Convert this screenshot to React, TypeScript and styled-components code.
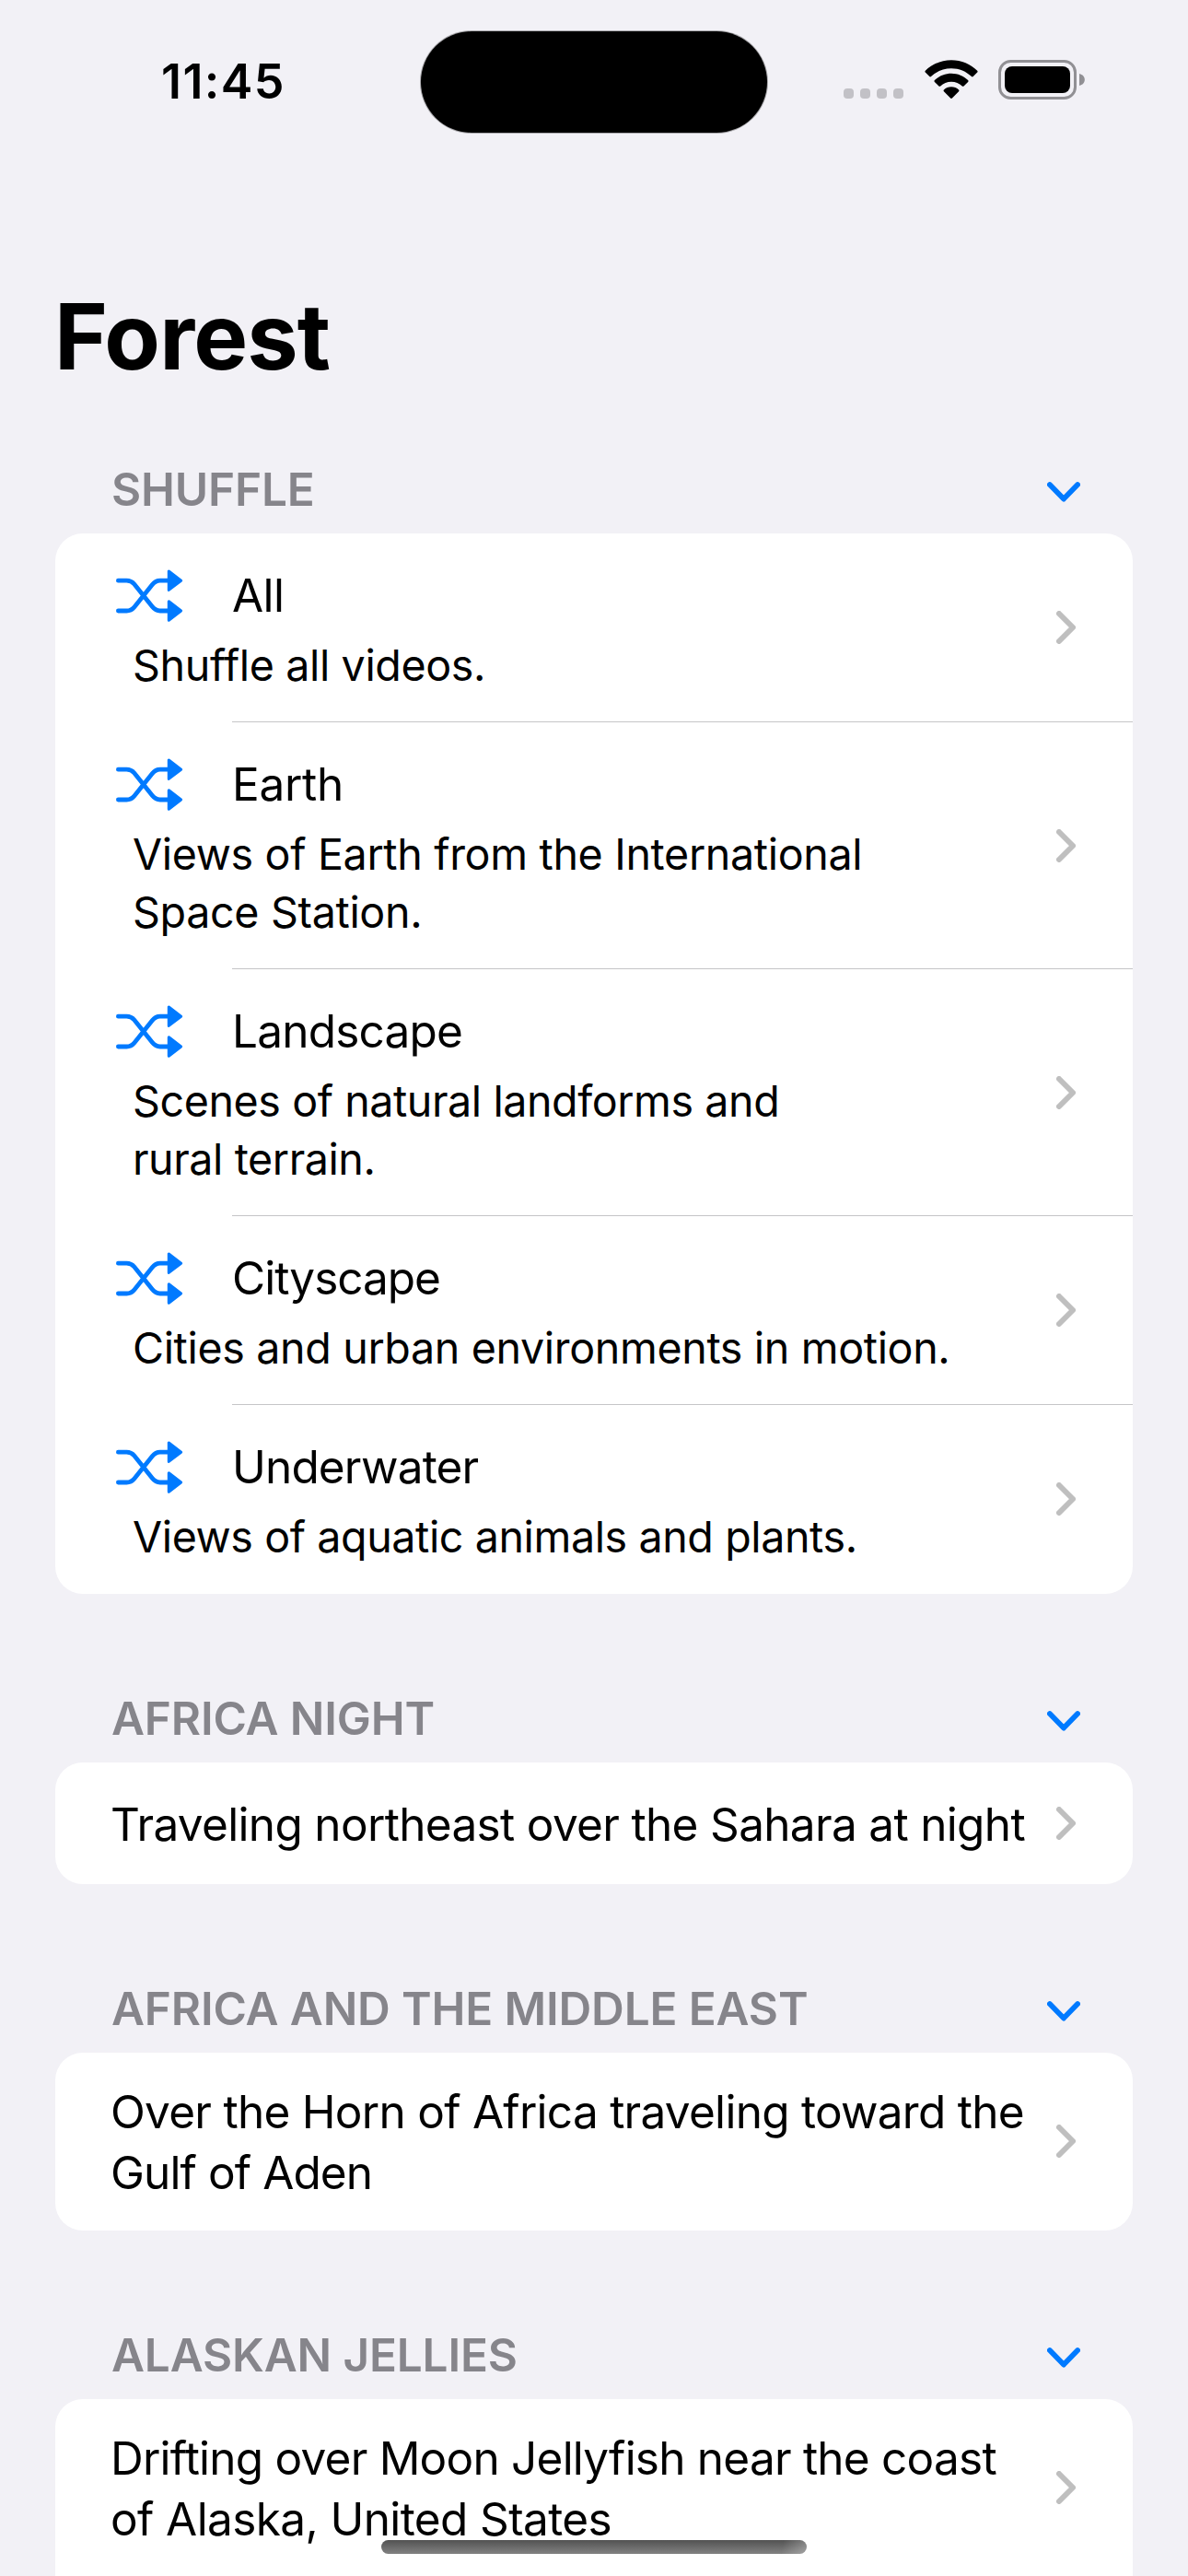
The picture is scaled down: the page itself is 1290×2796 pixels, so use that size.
import React from "react";
import styled, { createGlobalStyle } from "styled-components";

const GlobalStyle = createGlobalStyle`
  *, *::before, *::after { box-sizing: border-box; }
  body { margin: 0; background: #f2f1f6; }
  h1, h2, p { margin: 0; font-weight: 400; }
  svg { display: block; flex: none; }
`;

const Screen = styled.main`
  position: relative;
  width: 1290px;
  height: 2796px;
  overflow: hidden;
  background: #f2f1f6;
  color: #000;
  font-family: Inter, "Liberation Sans", sans-serif;
  white-space: nowrap;
`;

const StatusBar = styled.header`
  display: grid;
  grid-template-columns: 457px 376px 457px;
  height: 144px;
  padding-top: 33px;
`;

const Clock = styled.div`
  padding: 22px 0 0 175px;
  font-size: 52px;
  font-weight: 600;
  line-height: 68px;
  letter-spacing: 1.4px;
`;

const Island = styled.div`
  height: 110px;
  margin-top: 1px;
  border-radius: 55px;
  background: #000;
  box-shadow: 0 0 0 1px rgba(0, 0, 0, 0.3);
`;

const Indicators = styled.div`
  display: flex;
  align-items: flex-end;
  height: 75px;
  padding-left: 83px;
`;

const Signal = styled.div`
  display: flex;
  gap: 7px;
  margin: 0 23px 1px 0;
`;

const SignalDot = styled.i`
  width: 11px;
  height: 11px;
  border-radius: 4px;
  background: #c2c1c6;
`;

const WifiIcon = styled.svg`
  width: 58px;
  height: 43px;
  margin: 0 22px 0 0;
`;

const Title = styled.h1`
  margin-top: 161px;
  padding-left: 59px;
  font-size: 99px;
  font-weight: 700;
  line-height: 120px;
  letter-spacing: -0.9px;
`;

const Section = styled.section<{ $first?: boolean }>`
  padding: ${(p) => (p.$first ? "73px" : "102px")} 60px 0;
`;

const SectionHeader = styled.div`
  display: flex;
  align-items: center;
  justify-content: space-between;
  height: 66px;
  margin-bottom: 15px;
  padding: 0 57px 0 61px;
`;

const SectionTitle = styled.h2`
  color: #86858b;
  font-size: 49.5px;
  font-weight: 600;
  line-height: 66px;
  letter-spacing: -0.15px;
`;

const ChevronDown = styled.svg`
  width: 36px;
  height: 22px;
  margin-top: 5px;
`;

const Card = styled.div<{ $continues?: boolean }>`
  border-radius: ${(p) => (p.$continues ? "30px 30px 0 0" : "30px")};
  background: #fff;
`;

const ShuffleRow = styled.div`
  display: flex;
  align-items: center;
  justify-content: space-between;
  position: relative;
  padding: 32px 62px 31px 66px;

  &:not(:last-child)::after {
    content: "";
    position: absolute;
    left: 192px;
    right: 0;
    bottom: 0;
    height: 1px;
    background: #c5c5c7;
  }
`;

const RowBody = styled.div`
  padding-top: 2px;
`;

const RowHead = styled.div`
  display: flex;
  align-items: center;
  gap: 53px;
  height: 66px;
`;

const ShuffleIcon = styled.svg`
  width: 73px;
  height: 58px;
  margin-top: 2px;
`;

const RowTitle = styled.p<{ $track: number }>`
  font-size: 49.5px;
  line-height: 66px;
  letter-spacing: ${(p) => p.$track}px;
`;

const RowText = styled.p<{ $track: number }>`
  margin: 12px 0 -1px;
  padding-left: 18px;
  font-size: 46.6px;
  line-height: 63px;
  letter-spacing: ${(p) => p.$track}px;
  white-space: pre-line;
`;

const VideoRow = styled.div<{ $tall: boolean }>`
  display: flex;
  align-items: center;
  justify-content: space-between;
  padding: ${(p) => (p.$tall ? "31px 62px 30px 60px" : "34px 62px 32px 60px")};
`;

const VideoTitle = styled.p`
  font-size: 49.5px;
  line-height: 66px;
`;

const Line = styled.span<{ $track: number }>`
  display: block;
  letter-spacing: ${(p) => p.$track}px;
`;

const ChevronRight = styled.svg`
  width: 21px;
  height: 36px;
  margin-bottom: 2px;
`;

const CardTail = styled.div`
  height: 40px;
`;

const HomeIndicator = styled.div`
  position: absolute;
  left: 414px;
  top: 2757px;
  width: 462px;
  height: 15px;
  border-radius: 8px;
  background:
    linear-gradient(100deg, transparent 94%, rgba(255, 255, 255, 0.28) 100%),
    linear-gradient(#525252, #828282);
`;

type Item = { name: string; text: string; nameTrack: number; textTrack: number };

const shuffleItems: Item[] = [
  { name: "All", text: "Shuffle all videos.", nameTrack: -0.6, textTrack: -0.37 },
  { name: "Earth", text: "Views of Earth from the International\nSpace Station.", nameTrack: -0.3, textTrack: -0.33 },
  { name: "Landscape", text: "Scenes of natural landforms and\nrural terrain.", nameTrack: -0.8, textTrack: -0.42 },
  { name: "Cityscape", text: "Cities and urban environments in motion.", nameTrack: -1, textTrack: -0.35 },
  { name: "Underwater", text: "Views of aquatic animals and plants.", nameTrack: -0.85, textTrack: -0.4 },
];

type Video = { section: string; lines: { text: string; track: number }[]; continues?: boolean };

const videos: Video[] = [
  {
    section: "AFRICA NIGHT",
    lines: [{ text: "Traveling northeast over the Sahara at night", track: -0.67 }],
  },
  {
    section: "AFRICA AND THE MIDDLE EAST",
    lines: [
      { text: "Over the Horn of Africa traveling toward the", track: -0.73 },
      { text: "Gulf of Aden", track: -0.9 },
    ],
  },
  {
    section: "ALASKAN JELLIES",
    lines: [
      { text: "Drifting over Moon Jellyfish near the coast", track: -0.77 },
      { text: "of Alaska, United States", track: -0.61 },
    ],
    continues: true,
  },
];

const Disclosure = () => (
  <ChevronRight viewBox="0 0 21 36">
    <path d="M3 3 L18 18 L3 33" fill="none" stroke="#bfbfbf" strokeWidth="6" strokeLinecap="round" strokeLinejoin="round" />
  </ChevronRight>
);

const Header = ({ title }: { title: string }) => (
  <SectionHeader>
    <SectionTitle>{title}</SectionTitle>
    <ChevronDown viewBox="0 0 36 22">
      <path d="M2.9 3.1 L18 18.6 L33.1 3.1" fill="none" stroke="#007aff" strokeWidth="5.8" strokeLinecap="round" strokeLinejoin="round" />
    </ChevronDown>
  </SectionHeader>
);

const Shuffle = () => (
  <ShuffleIcon viewBox="0 0 73 58">
    <g fill="none" stroke="#007aff" strokeWidth="4.8" strokeLinecap="round">
      <path d="M2.4 12.2 H11.5 C15 12.2 17.4 13.3 19.8 16 L39.4 40.6 C41.8 43.6 44.2 45 47.8 45 H57" />
      <path d="M2.4 45 H11.5 C15 45 17.4 43.9 19.8 41 L39.4 16.6 C41.8 13.6 44.2 12.2 47.8 12.2 H57" />
    </g>
    <g fill="#007aff" stroke="#007aff" strokeWidth="3" strokeLinejoin="round">
      <path d="M57.3 2 V22.4 L70.6 12.2 Z" />
      <path d="M57.3 34.8 V55.2 L70.6 45 Z" />
    </g>
  </ShuffleIcon>
);

export default function App() {
  return (
    <>
      <GlobalStyle />
      <Screen>
        <StatusBar>
          <Clock>11:45</Clock>
          <Island />
          <Indicators>
            <Signal>
              <SignalDot />
              <SignalDot />
              <SignalDot />
              <SignalDot />
            </Signal>
            <WifiIcon viewBox="0 0 58 43">
              <path d="M29 0.2 C40 0.2 50 4.6 57.2 11.8 Q58 12.7 57.2 13.6 L52.7 18.1 Q51.9 18.9 51 18.1 C45.2 12.5 37.5 9.2 29 9.2 S12.8 12.5 7 18.1 Q6.1 18.9 5.3 18.1 L0.8 13.6 Q0 12.7 0.8 11.8 C8 4.6 18 0.2 29 0.2 Z" />
              <path d="M29 14.8 C36 14.8 42.4 17.6 47.1 22.1 Q48 23 47.1 23.9 L42.5 28.4 Q41.7 29.2 40.8 28.4 C37.7 25.5 33.5 23.7 29 23.7 S20.3 25.5 17.2 28.4 Q16.3 29.2 15.5 28.4 L10.9 23.9 Q10 23 10.9 22.1 C15.6 17.6 22 14.8 29 14.8 Z" />
              <path d="M29 29.3 C32.2 29.3 34.9 30.5 37.1 32.5 Q38 33.4 37.1 34.2 L29.9 41.5 Q29 42.4 28.1 41.5 L20.9 34.2 Q20 33.4 20.9 32.5 C23.1 30.5 25.8 29.3 29 29.3 Z" />
            </WifiIcon>
            <svg width="95" height="43" viewBox="0 0 95 43">
              <rect x="1.5" y="1.5" width="82" height="40" rx="12" fill="none" stroke="#919094" strokeWidth="3" />
              <rect x="7" y="7" width="71" height="29" rx="8" />
              <path d="M88 15 C91.5 15.8 93.8 18.3 93.8 21.5 S91.5 27.2 88 28 Z" fill="#919094" />
            </svg>
          </Indicators>
        </StatusBar>

        <Title>Forest</Title>

        <Section $first>
          <Header title="SHUFFLE" />
          <Card>
            {shuffleItems.map((item) => (
              <ShuffleRow key={item.name}>
                <RowBody>
                  <RowHead>
                    <Shuffle />
                    <RowTitle $track={item.nameTrack}>{item.name}</RowTitle>
                  </RowHead>
                  <RowText $track={item.textTrack}>{item.text}</RowText>
                </RowBody>
                <Disclosure />
              </ShuffleRow>
            ))}
          </Card>
        </Section>

        {videos.map((video) => (
          <Section key={video.section}>
            <Header title={video.section} />
            <Card $continues={video.continues}>
              <VideoRow $tall={video.lines.length > 1}>
                <VideoTitle>
                  {video.lines.map((line) => (
                    <Line key={line.text} $track={line.track}>
                      {line.text}
                    </Line>
                  ))}
                </VideoTitle>
                <Disclosure />
              </VideoRow>
              {video.continues && <CardTail />}
            </Card>
          </Section>
        ))}

        <HomeIndicator />
      </Screen>
    </>
  );
}
